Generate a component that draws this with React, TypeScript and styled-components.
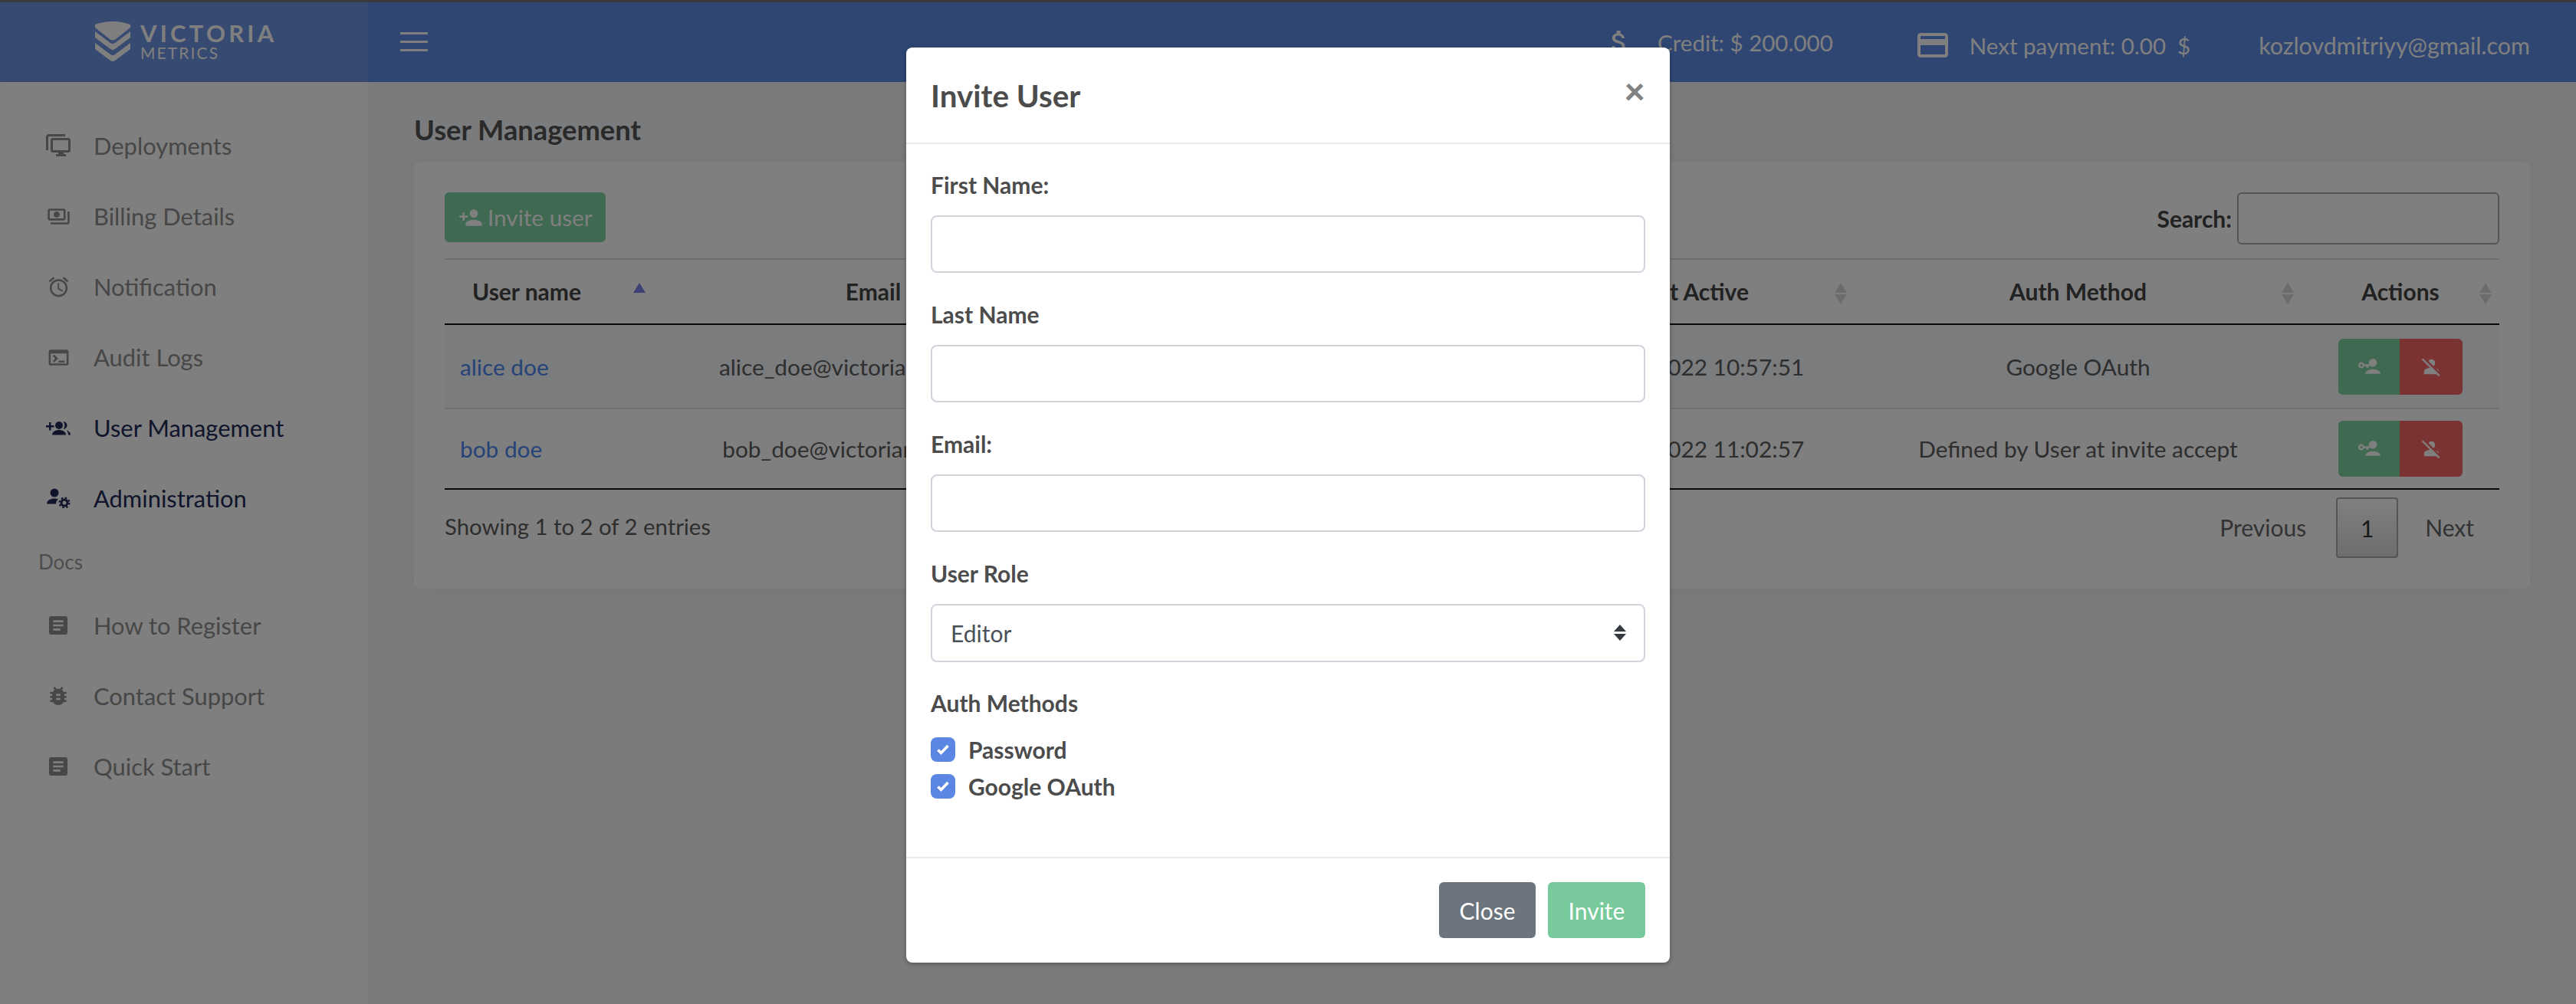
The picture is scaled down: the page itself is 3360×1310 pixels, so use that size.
import React from "react";
import styled, { createGlobalStyle } from "styled-components";
import {
  MdArticle,
  MdAttachMoney,
  MdBugReport,
  MdCreditCard,
  MdOutlineAlarm,
  MdOutlinePayments,
  MdOutlineTerminal,
  MdPersonAdd,
  MdPersonOff,
} from "react-icons/md";

const GlobalStyle = createGlobalStyle`
  html, body {
    margin: 0;
    padding: 0;
    height: 1310px;
    overflow: hidden;
    background: #f4f6fa;
    font-family: Lato, "Noto Sans", sans-serif;
  }
  * { box-sizing: border-box; }
`;

const Page = styled.div`
  position: relative;
  width: 3360px;
  height: 1310px;
  overflow: hidden;
  display: flex;
  flex-direction: column;
`;

const TopLine = styled.div`
  height: 3px;
  background: #777;
`;

const Header = styled.header`
  height: 104px;
  display: flex;
  align-items: center;
  background: #5e8ce4;
  color: #fff;
  font-size: 30px;
  padding-right: 60px;
`;

const Brand = styled.div`
  width: 480px;
  height: 100%;
  display: flex;
  align-items: center;
  gap: 13px;
  padding: 0 0 2px 124px;
  background: #6e94e2;
`;

const BrandText = styled.div`
  display: flex;
  flex-direction: column;
`;

const BrandName = styled.span`
  font-size: 31px;
  line-height: 30px;
  font-weight: 700;
  letter-spacing: 4.2px;
`;

const BrandSub = styled.span`
  font-size: 21px;
  line-height: 22px;
  letter-spacing: 2.1px;
`;

const Burger = styled.svg`
  margin-left: 42px;
  margin-right: auto;
  margin-top: -2px;
`;

const HeaderItem = styled.div<{ $left: number; $drop?: number; $size?: number }>`
  display: flex;
  align-items: center;
  margin-left: ${(p) => p.$left}px;
  margin-top: ${(p) => p.$drop ?? 0}px;
  font-size: ${(p) => p.$size ?? 30}px;
  white-space: nowrap;
`;

const HeaderLabel = styled.span<{ $gap: number }>`
  margin-left: ${(p) => p.$gap}px;
`;

const Body = styled.div`
  flex: 1;
  display: flex;
  min-height: 0;
`;

const Sidebar = styled.aside`
  width: 480px;
  padding-top: 37px;
  background: #fff;
  box-shadow: 0 0 20px rgba(0, 0, 0, 0.05);
`;

const NavItem = styled.div<{ $active?: boolean }>`
  height: 92px;
  display: flex;
  align-items: center;
  padding-left: 60px;
  font-size: 30.9px;
  color: ${(p) => (p.$active ? "#202a56" : "#8e8e8e")};
  svg {
    flex: none;
  }
`;

const NavIcon = styled.span`
  width: 32px;
  height: 32px;
  display: flex;
  align-items: center;
  justify-content: center;
  margin-right: 30px;
`;

const NavSection = styled.div`
  height: 74px;
  display: flex;
  align-items: center;
  padding-left: 50px;
  font-size: 26px;
  color: #9a9a9a;
`;

const Main = styled.main`
  flex: 1;
  padding: 0 60px;
  background: #f4f6fa;
`;

const Title = styled.h1`
  height: 104px;
  margin: 0;
  display: flex;
  align-items: center;
  padding-top: 20px;
  font-size: 36.3px;
  font-weight: 700;
  color: #555;
`;

const Card = styled.section`
  height: 557px;
  padding: 40px;
  border-radius: 8px;
  background: #fff;
  box-shadow: 0 0 30px rgba(0, 0, 0, 0.04);
`;

const Toolbar = styled.div`
  height: 86px;
  display: flex;
  align-items: flex-start;
  justify-content: space-between;
`;

const InviteButton = styled.button`
  width: 210px;
  height: 65px;
  display: flex;
  align-items: center;
  gap: 6px;
  padding: 0 0 0 18px;
  border: 0;
  border-radius: 6px;
  background: #7ed2a0;
  color: #fff;
  font: 400 29.7px Lato, sans-serif;
`;

const SearchLabel = styled.label`
  display: flex;
  align-items: center;
  gap: 7px;
  font-size: 30px;
  font-weight: 700;
  color: #444;
`;

const SearchInput = styled.input`
  width: 342px;
  height: 68px;
  border: 2px solid #aaa;
  border-radius: 6px;
  background: transparent;
`;

const Table = styled.table`
  width: 2680px;
  table-layout: fixed;
  border-collapse: collapse;
  border-top: 2px solid #ddd;
  border-bottom: 2px solid #111;
  font-size: 29.8px;
  color: #5c5c5c;
`;

const Th = styled.th<{ $shift?: number }>`
  position: relative;
  height: 85px;
  padding: 0 ${(p) => p.$shift ?? 20}px 2px 20px;
  border-bottom: 2px solid #111;
  font-size: 30px;
  font-weight: 700;
  text-align: center;
  color: #444;
`;

const SortIcon = styled.span<{ $asc?: boolean }>`
  position: absolute;
  top: 30px;
  right: 10px;
  width: 16px;
  height: 28px;
  &::before,
  &::after {
    content: "";
    position: absolute;
    left: 0;
    border-left: 8px solid transparent;
    border-right: 8px solid transparent;
  }
  &::before {
    top: 0;
    border-bottom: 13px solid ${(p) => (p.$asc ? "#8080f0" : "#d8d8d8")};
  }
  &::after {
    bottom: 0;
    border-top: 13px solid ${(p) => (p.$asc ? "transparent" : "#d8d8d8")};
  }
`;

const Row = styled.tr<{ $striped?: boolean }>`
  background: ${(p) => (p.$striped ? "#f6f8fc" : "transparent")};
  border-bottom: ${(p) => (p.$striped ? "2px solid #e0e0e2" : "0")};
  td {
    padding-top: ${(p) => (p.$striped ? 18 : 15)}px;
    padding-bottom: ${(p) => (p.$striped ? 17 : 15)}px;
  }
`;

const Td = styled.td<{ $link?: boolean }>`
  padding-left: 20px;
  padding-right: 20px;
  text-align: ${(p) => (p.$link ? "left" : "center")};
  white-space: nowrap;
  overflow: hidden;
  color: ${(p) => (p.$link ? "#4a86ee" : "inherit")};
`;

const ActionGroup = styled.div`
  display: flex;
  width: fit-content;
  height: 73px;
  margin: 0 auto;
  border-radius: 6px;
  overflow: hidden;
`;

const ActionButton = styled.button<{ $danger?: boolean }>`
  width: ${(p) => (p.$danger ? 82 : 80)}px;
  display: flex;
  align-items: center;
  justify-content: center;
  padding: 0;
  border: 0;
  background: ${(p) => (p.$danger ? "#f46466" : "#7ed2a0")};
  color: #fff;
`;

const TableFooter = styled.div`
  display: flex;
  align-items: center;
  justify-content: space-between;
  padding-top: 10px;
  font-size: 30px;
  color: #5c5c5c;
`;

const EntriesInfo = styled.span`
  font-size: 29.3px;
  margin-top: -4px;
`;

const Pager = styled.div`
  display: flex;
  align-items: center;
  margin-right: 33px;
  gap: 37px;
  color: #666;
  span {
    margin-top: -2px;
  }
`;

const PageButton = styled.div`
  width: 81px;
  height: 79px;
  margin: 0 -2px 0 2px;
  display: flex;
  align-items: center;
  justify-content: center;
  border: 2px solid #aaa;
  border-radius: 4px;
  background: linear-gradient(#fff, #dcdcdc);
  color: #333;
`;

const Backdrop = styled.div`
  position: absolute;
  inset: 0;
  background: rgba(0, 0, 0, 0.5);
`;

const Modal = styled.div`
  position: absolute;
  top: 62px;
  left: 1182px;
  width: 996px;
  height: 1194px;
  display: flex;
  flex-direction: column;
  border-radius: 8px;
  background: #fff;
  box-shadow: 0 2px 6px rgba(0, 0, 0, 0.3);
  color: #4c4c4c;
`;

const ModalHeader = styled.div`
  height: 126px;
  flex: none;
  display: flex;
  align-items: center;
  justify-content: space-between;
  padding: 0 32px;
  border-bottom: 2px solid #e9ecef;
`;

const ModalTitle = styled.h2`
  margin: 0;
  font-size: 40.4px;
  font-weight: 700;
`;

const CloseMark = styled.span`
  margin-top: -13px;
  font-size: 48px;
  line-height: 1;
  font-weight: 900;
  color: #828282;
`;

const ModalBody = styled.div`
  flex: 1;
  padding: 31px 32px 0;
`;

const Field = styled.div`
  height: 169px;
  display: flex;
  flex-direction: column;
`;

const FieldLabel = styled.label`
  height: 62px;
  flex: none;
  display: flex;
  align-items: center;
  padding-bottom: 18px;
  font-size: 30px;
  font-weight: 700;
`;

const TextInput = styled.input`
  width: 100%;
  height: 75px;
  border: 2px solid #ced4da;
  border-radius: 8px;
  background: #fff;
`;

const SelectWrap = styled.div`
  position: relative;
`;

const Select = styled.select`
  width: 100%;
  height: 76px;
  padding: 0 24px;
  appearance: none;
  border: 2px solid #ced4da;
  border-radius: 8px;
  background: #fff;
  color: #495057;
  font: 400 30px Lato, sans-serif;
`;

const SelectArrows = styled.svg`
  position: absolute;
  top: 27px;
  right: 25px;
`;

const CheckRow = styled.label`
  height: 48px;
  display: flex;
  align-items: center;
  gap: 17px;
  font-size: 30px;
  font-weight: 700;
`;

const CheckBox = styled.span`
  width: 32px;
  height: 32px;
  display: flex;
  border-radius: 8px;
  background: #5b87e3;
  color: #fff;
`;

const ChecksList = styled.div`
  margin-top: -3px;
`;

const ModalFooter = styled.div`
  height: 138px;
  flex: none;
  display: flex;
  justify-content: flex-end;
  gap: 16px;
  padding: 31px 32px 0;
  border-top: 2px solid #e9ecef;
`;

const FooterButton = styled.button<{ $primary?: boolean }>`
  width: ${(p) => (p.$primary ? 127 : 126)}px;
  height: 73px;
  border: 0;
  border-radius: 6px;
  background: ${(p) => (p.$primary ? "#78ca9c" : "#6c757d")};
  color: #fff;
  font: 400 30px Lato, sans-serif;
`;

const DeploymentsIcon = () => (
  <svg width="32" height="30" viewBox="0 0 32 30" fill="none">
    <path d="M1.500 21V3.500a2 2 0 0 1 2-2H25" stroke="currentColor" strokeWidth="3" />
    <rect x="7.500" y="6.500" width="23" height="16" rx="1.500" stroke="currentColor" strokeWidth="3" />
    <path d="M16 23h7v3h3v3H13v-3h3z" fill="currentColor" />
  </svg>
);

const GroupAddIcon = () => (
  <svg width="32" height="19" viewBox="0 0 32 19" fill="currentColor">
    <path d="M4 6V2h2.500v4h4v2.500h-4v4H4v-4H0V6z" />
    <circle cx="17" cy="6" r="5" />
    <path d="M8 18.500c0-4.500 5-6.500 9-6.500s9 2 9 6.500z" />
    <path d="M22.500 1a5 5 0 1 1 0 10 7.500 7.500 0 0 0 0-10z" />
    <path d="M27 12.500c2.500.8 5 2.700 5 6h-3c0-2.300-.7-4.300-2-6z" />
  </svg>
);

const AdminIcon = () => (
  <svg width="32" height="26" viewBox="0 0 32 26" fill="currentColor">
    <circle cx="11" cy="6" r="5.500" />
    <path d="M1 20.500c0-4.500 5-7 10-7 2 0 3.500.3 5 .8-2 1.500-3 3.700-3 6.200z" />
    <circle cx="24" cy="19" r="4" fill="none" stroke="currentColor" strokeWidth="3" />
    <circle cx="24" cy="19" r="6.500" fill="none" stroke="currentColor" strokeWidth="2" strokeDasharray="2.500 2.600" />
  </svg>
);

const KeyUserIcon = () => (
  <svg width="31" height="21" viewBox="0 0 46 32" fill="currentColor">
    <circle cx="30" cy="8" r="8" />
    <path d="M15 30c0-6 9-9 15-9s15 3 15 9z" />
    <path
      fillRule="evenodd"
      d="M7 7a6 6 0 0 1 5.600 4H24v4h-3v3h-4v-3h-4.400A6 6 0 1 1 7 7zm0 3.500a2.500 2.500 0 1 0 0 5 2.500 2.500 0 0 0 0-5z"
    />
  </svg>
);

const CheckMark = () => (
  <svg width="32" height="32" viewBox="0 0 32 32" fill="none">
    <path d="M9.500 16.500l4 4 9-9.500" stroke="currentColor" strokeWidth="3.500" />
  </svg>
);

const navTop = [
  { label: "Deployments", icon: <DeploymentsIcon /> },
  { label: "Billing Details", icon: <MdOutlinePayments size={31} /> },
  { label: "Notification", icon: <MdOutlineAlarm size={31} /> },
  { label: "Audit Logs", icon: <MdOutlineTerminal size={31} /> },
  { label: "User Management", icon: <GroupAddIcon />, active: true },
  { label: "Administration", icon: <AdminIcon />, active: true },
];

const navDocs = [
  { label: "How to Register", icon: <MdArticle size={32} /> },
  { label: "Contact Support", icon: <MdBugReport size={32} /> },
  { label: "Quick Start", icon: <MdArticle size={32} /> },
];

const users = [
  {
    name: "alice doe",
    email: "alice_doe@victoriametrics.com",
    role: "Admin",
    active: "03/02/2022 10:57:51",
    auth: "Google OAuth",
  },
  {
    name: "bob doe",
    email: "bob_doe@victoriametrics.com",
    role: "Editor",
    active: "03/02/2022 11:02:57",
    auth: "Defined by User at invite accept",
  },
];

const widths = [272, 574, 570, 423, 583, 258];

const App = () => {
  return (
    <Page>
      <GlobalStyle />
      <TopLine />
      <Header>
        <Brand>
          <svg width="46" height="53" viewBox="0 0 46 53" fill="currentColor">
            <path d="M0 4Q23-4 46 4v4L27 23q-4 3-8 0L0 8z" />
            <path d="M0 13l20 15q3 2 6 0l20-15v8L26 36q-3 2-6 0L0 21z" />
            <path d="M0 28l20 15q3 2 6 0l20-15v8L26 51q-3 2-6 0L0 36z" />
          </svg>
          <BrandText>
            <BrandName>VICTORIA</BrandName>
            <BrandSub>METRICS</BrandSub>
          </BrandText>
        </Brand>
        <Burger width="36" height="25" viewBox="0 0 36 25" fill="currentColor">
          <rect width="36" height="3" />
          <rect y="11" width="36" height="3" />
          <rect y="22" width="36" height="3" />
        </Burger>
        <HeaderItem $left={0} $size={29.5}>
          <MdAttachMoney size={40} />
          <HeaderLabel $gap={30}>Credit: $ 200.000</HeaderLabel>
        </HeaderItem>
        <HeaderItem $left={106} $drop={8} $size={29.5}>
          <MdCreditCard size={48} />
          <HeaderLabel $gap={24}>Next payment: 0.00&nbsp;&nbsp;$</HeaderLabel>
        </HeaderItem>
        <HeaderItem $left={89} $drop={8} $size={30.4}>
          kozlovdmitriyy@gmail.com
        </HeaderItem>
      </Header>
      <Body>
        <Sidebar>
          {navTop.map((item) => (
            <NavItem key={item.label} $active={item.active}>
              <NavIcon>{item.icon}</NavIcon>
              {item.label}
            </NavItem>
          ))}
          <NavSection>Docs</NavSection>
          {navDocs.map((item) => (
            <NavItem key={item.label}>
              <NavIcon>{item.icon}</NavIcon>
              {item.label}
            </NavItem>
          ))}
        </Sidebar>
        <Main>
          <Title>User Management</Title>
          <Card>
            <Toolbar>
              <InviteButton>
                <MdPersonAdd size={32} />
                Invite user
              </InviteButton>
              <SearchLabel>
                Search:
                <SearchInput />
              </SearchLabel>
            </Toolbar>
            <Table>
              <colgroup>
                {widths.map((w, i) => (
                  <col key={i} style={{ width: w }} />
                ))}
              </colgroup>
              <thead>
                <tr>
                  <Th $shift={78}>
                    User name
                    <SortIcon $asc />
                  </Th>
                  <Th>
                    Email
                    <SortIcon />
                  </Th>
                  <Th>
                    Role
                    <SortIcon />
                  </Th>
                  <Th>
                    Last Active
                    <SortIcon />
                  </Th>
                  <Th>
                    Auth Method
                    <SortIcon />
                  </Th>
                  <Th>
                    Actions
                    <SortIcon />
                  </Th>
                </tr>
              </thead>
              <tbody>
                {users.map((user, i) => (
                  <Row key={user.name} $striped={i === 0}>
                    <Td $link>{user.name}</Td>
                    <Td>{user.email}</Td>
                    <Td>{user.role}</Td>
                    <Td>{user.active}</Td>
                    <Td>{user.auth}</Td>
                    <Td>
                      <ActionGroup>
                        <ActionButton>
                          <KeyUserIcon />
                        </ActionButton>
                        <ActionButton $danger>
                          <MdPersonOff size={29} />
                        </ActionButton>
                      </ActionGroup>
                    </Td>
                  </Row>
                ))}
              </tbody>
            </Table>
            <TableFooter>
              <EntriesInfo>Showing 1 to 2 of 2 entries</EntriesInfo>
              <Pager>
                <span>Previous</span>
                <PageButton>1</PageButton>
                <span>Next</span>
              </Pager>
            </TableFooter>
          </Card>
        </Main>
      </Body>
      <Backdrop />
      <Modal>
        <ModalHeader>
          <ModalTitle>Invite User</ModalTitle>
          <CloseMark>×</CloseMark>
        </ModalHeader>
        <ModalBody>
          <Field>
            <FieldLabel>First Name:</FieldLabel>
            <TextInput />
          </Field>
          <Field>
            <FieldLabel>Last Name</FieldLabel>
            <TextInput />
          </Field>
          <Field>
            <FieldLabel>Email:</FieldLabel>
            <TextInput />
          </Field>
          <Field>
            <FieldLabel>User Role</FieldLabel>
            <SelectWrap>
              <Select defaultValue="Editor">
                <option>Editor</option>
              </Select>
              <SelectArrows width="16" height="21" viewBox="0 0 16 21" fill="#343a40">
                <path d="M8 0l8 9H0z" />
                <path d="M0 12h16l-8 9z" />
              </SelectArrows>
            </SelectWrap>
          </Field>
          <FieldLabel>Auth Methods</FieldLabel>
          <ChecksList>
            <CheckRow>
              <CheckBox>
                <CheckMark />
              </CheckBox>
              Password
            </CheckRow>
            <CheckRow>
              <CheckBox>
                <CheckMark />
              </CheckBox>
              Google OAuth
            </CheckRow>
          </ChecksList>
        </ModalBody>
        <ModalFooter>
          <FooterButton>Close</FooterButton>
          <FooterButton $primary>Invite</FooterButton>
        </ModalFooter>
      </Modal>
    </Page>
  );
};

export default App;
